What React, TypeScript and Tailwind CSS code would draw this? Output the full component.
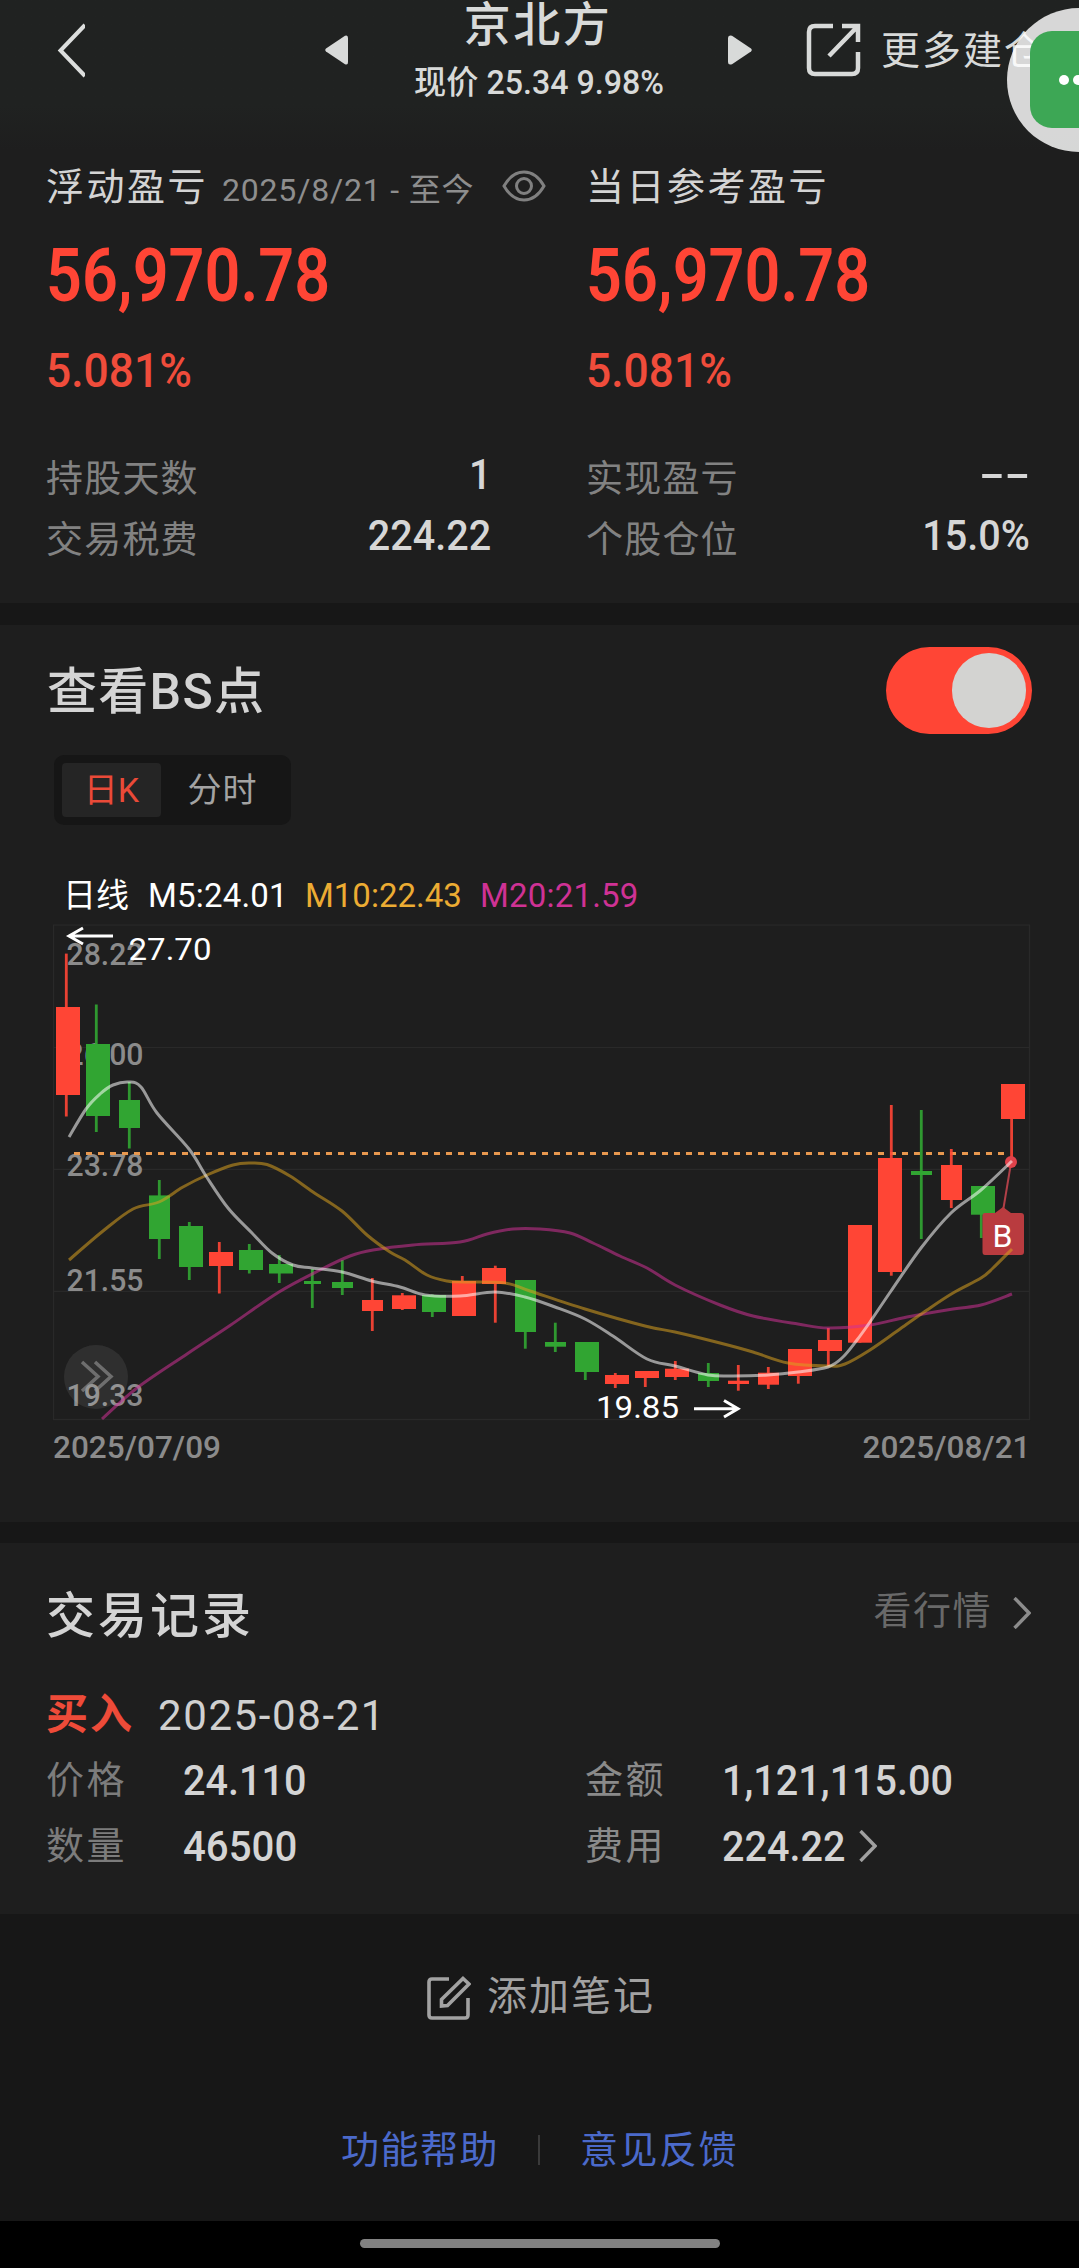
import { useState } from 'react';
import type { ReactNode } from 'react';

type Candle = { x: number; w: number; wick: number; high: number; low: number; top: number; bottom: number; up: boolean };
type Point = [number, number];

const RED = '#ff4535';
const GREEN = '#31a532';

// x, width, wick x, high, low, body top, body bottom, up
const rows: [number, number, number, number, number, number, number, boolean][] = [
    [56, 24, 66.3, 953.6, 1116.5, 1007, 1095, true],
    [86, 24, 96.3, 1004.5, 1132, 1044, 1116, false],
    [119, 21, 129.3, 1082, 1148.5, 1100, 1128, false],
    [149, 21, 159.3, 1180, 1259, 1195.4, 1239, false],
    [179, 24, 189.3, 1222, 1280, 1226, 1267, false],
    [209, 24, 219.3, 1242, 1293.5, 1252, 1266, true],
    [239, 24, 249.3, 1244, 1273.5, 1250, 1270, false],
    [269, 24, 279.3, 1255, 1283, 1264, 1273.5, false],
    [304, 17, 312.3, 1269, 1308, 1281, 1284, false],
    [332, 21, 342.3, 1260, 1295, 1282, 1288, false],
    [362, 21, 372.3, 1278, 1331, 1300, 1311, true],
    [392, 24, 402.3, 1293, 1310, 1295.3, 1309, true],
    [422, 24, 432.3, 1294.5, 1317, 1295, 1312, false],
    [452, 24, 462.3, 1276, 1316, 1281, 1316, true],
    [482, 24, 495.3, 1265.7, 1322.7, 1268, 1284, true],
    [515, 21, 525.3, 1280, 1348.7, 1280, 1332, false],
    [545, 21, 555.3, 1322.7, 1352, 1342, 1346.7, false],
    [575, 24, 585.3, 1342, 1380, 1342, 1372, false],
    [605, 24, 615.3, 1373, 1388, 1375, 1384, true],
    [635, 24, 645.3, 1371, 1387, 1371, 1378, true],
    [665, 24, 675.3, 1361, 1380, 1368.7, 1377, true],
    [698, 21, 708.3, 1363, 1387, 1373, 1381, false],
    [728, 21, 738.3, 1365, 1390.7, 1380.7, 1384, true],
    [758, 21, 768.3, 1367, 1389, 1372.7, 1384.7, true],
    [788, 24, 798.3, 1349, 1383.7, 1349, 1376, true],
    [818, 24, 828.3, 1328, 1366, 1340, 1351, true],
    [848, 24, 860, 1225, 1342.7, 1225, 1342.7, true],
    [878, 24, 891.3, 1105, 1275.7, 1158, 1272, true],
    [911, 21, 921.3, 1110, 1239, 1171, 1175, false],
    [941, 21, 951.3, 1149, 1208, 1165, 1200, true],
    [971, 24, 981.3, 1186, 1238, 1186, 1214.7, false],
    [1001, 24, 1011.6, 1084, 1160, 1084, 1119, true],
];
const candles: Candle[] = rows.map(([x, w, wick, high, low, top, bottom, up]) => ({ x, w, wick, high, low, top, bottom, up }));

const ma5: Point[] = [[69, 1137], [86, 1109], [100, 1094], [113, 1085], [129, 1082], [141, 1087], [157, 1113], [189, 1149], [206, 1176], [228, 1208], [252, 1233], [272, 1253], [293, 1265], [312, 1268], [342, 1272], [372, 1281], [400, 1287], [425, 1295], [460, 1296], [495, 1292], [525, 1297], [555, 1307], [585, 1319], [613, 1336], [647, 1359], [675, 1366], [708, 1375], [733, 1376], [768, 1375], [798, 1372], [828, 1367], [843, 1357], [857, 1340], [870, 1322], [891, 1291], [921, 1248], [951, 1213], [981, 1190], [1012, 1161]];
const ma10: Point[] = [[69, 1260], [103, 1231], [133, 1209], [159, 1202], [183, 1187], [207, 1175], [233, 1165], [250, 1163], [267, 1164.5], [290, 1176], [313, 1192], [342, 1211], [367, 1235], [390, 1252], [405, 1260], [427, 1275], [447, 1281], [463, 1282], [505, 1283], [530, 1291], [585, 1309], [645, 1326], [675, 1332], [720, 1343], [753, 1352], [788, 1363], [828, 1366], [845, 1364], [870, 1350], [900, 1329], [927, 1310], [953, 1293], [981, 1278], [993, 1268], [1012, 1249]];
const ma20: Point[] = [[102, 1419], [137, 1388], [187, 1354], [230, 1325.5], [279, 1292], [320, 1270], [350, 1256], [373, 1250], [413, 1245], [460, 1242], [487, 1234], [513, 1229], [540, 1229], [570, 1233], [593, 1243], [620, 1256], [647, 1268], [675, 1285], [720, 1305], [753, 1316], [798, 1324], [828, 1328], [870, 1325], [907, 1317], [953, 1309], [981, 1305], [1012, 1294]];

// curva suave que pasa por todos los puntos
function smooth(pts: Point[]) {
    let d = `M${pts[0][0]} ${pts[0][1]}`;
    for (let i = 0; i < pts.length - 1; i++) {
        const a = pts[i - 1] ?? pts[i];
        const b = pts[i];
        const c = pts[i + 1];
        const e = pts[i + 2] ?? c;
        d += ` C${b[0] + (c[0] - a[0]) / 6} ${b[1] + (c[1] - a[1]) / 6} ${c[0] - (e[0] - b[0]) / 6} ${c[1] - (e[1] - b[1]) / 6} ${c[0]} ${c[1]}`;
    }
    return d;
}

const axis = [
    { label: '28.22', y: 965 },
    { label: '26.00', y: 1064.5 },
    { label: '23.78', y: 1176 },
    { label: '21.55', y: 1291 },
    { label: '19.33', y: 1406 },
];

function Chart() {
    return (
        <svg className="mt-1 block h-[560px] w-full" viewBox="0 920 1079 560" fontFamily='Roboto, "Liberation Sans", sans-serif'>
            {/* marco y lineas de la cuadricula */}
            <g stroke="#292929" strokeWidth="1.2" fill="none">
                <rect x="53.5" y="925" width="976" height="494.5" />
                <path d="M54 1047.5H1029M54 1169.3H1029M54 1291.3H1029" />
            </g>
            <g fill="#8b8b8b" fontSize="32" fontWeight="500">
                {axis.map((a) => (
                    <text key={a.label} x="66.5" y={a.y} textLength="77" lengthAdjust="spacingAndGlyphs">{a.label}</text>
                ))}
                <text x="53" y="1457.5" textLength="168" lengthAdjust="spacingAndGlyphs">2025/07/09</text>
                <text x="862.5" y="1457.5" textLength="168" lengthAdjust="spacingAndGlyphs">2025/08/21</text>
            </g>
            <path d="M73 1153.4H1005" stroke="#e8984f" strokeWidth="3" strokeDasharray="6 6" strokeDashoffset="11" />
            {/* boton para expandir */}
            <circle cx="96" cy="1377" r="32" fill="#fff" opacity="0.08" />
            <path d="M82 1362L98 1376.5L82 1391M95 1362L111 1376.5L95 1391" stroke="#9a9a9a" strokeOpacity="0.6" strokeWidth="3.5" fill="none" />
            {candles.map((c) => (
                <g key={c.x} fill={c.up ? RED : GREEN}>
                    <rect x={c.wick - 1.4} y={c.high} width="2.8" height={c.low - c.high} opacity="0.9" />
                    <rect x={c.x} y={c.top} width={c.w} height={c.bottom - c.top} />
                </g>
            ))}
            {/* marca de compra */}
            <g>
                <path d="M1011 1163L1003 1211" stroke="#b04048" strokeWidth="2" />
                <path d="M985 1213H995L1003 1207L1011 1213H1021Q1024 1213 1024 1216V1252Q1024 1255 1021 1255H985Q982.5 1255 982.5 1252V1216Q982.5 1213 985 1213Z" fill="#b93b3f" />
                <circle cx="1011" cy="1162" r="6" fill="#e0424b" />
                <text x="1002.5" y="1247" fontSize="32" fill="#fff" textAnchor="middle">B</text>
            </g>
            <g fill="none" strokeWidth="3" strokeOpacity="0.55">
                <path d={smooth(ma20)} stroke="#cf3295" />
                <path d={smooth(ma10)} stroke="#d9a01f" />
                <path d={smooth(ma5)} stroke="#ffffff" />
            </g>
            <g stroke="#fff" strokeWidth="3" fill="none">
                <path d="M69 936H113M83 928L69 936L83 944" />
                <path d="M694 1408.7H738M724 1400.5L738 1408.7L724 1417" />
            </g>
            <g fill="#fff" fontSize="32">
                <text x="128.5" y="960" textLength="83" lengthAdjust="spacingAndGlyphs">27.70</text>
                <text x="596" y="1418" textLength="83" lengthAdjust="spacingAndGlyphs">19.85</text>
            </g>
        </svg>
    );
}

function Chevron({ color }: { color: string }) {
    return (
        <svg className="h-8 w-[18px] shrink-0" viewBox="0 0 18 32" fill="none" stroke={color} strokeWidth="3.4">
            <path d="M1.5 1L16 16L1.5 31" />
        </svg>
    );
}

function StatRow({ label, children }: { label: string; children: ReactNode }) {
    return (
        <div className="flex h-[61px] items-center justify-between pr-[49px]">
            <span className="text-[37px] tracking-[1.2px] text-[#828282]">{label}</span>
            <span className="origin-right scale-x-[0.92] pb-[11px] text-[43px] leading-[52px] font-medium text-[#d6d6d6]">{children}</span>
        </div>
    );
}

function ProfitValues() {
    return (
        <>
            <div className="mt-6 h-20 origin-left scale-x-[0.85] text-[74px] leading-[80px] font-semibold text-[#ff4535]">56,970.78</div>
            <div className="mt-[30px] h-[50px] origin-left scale-x-[0.905] text-[49px] leading-[50px] font-medium text-[#f04c3b]">5.081%</div>
        </>
    );
}

export default function App() {
    const [showPoints, setShowPoints] = useState(true);
    const [tab, setTab] = useState('day');

    return (
        <div className="relative flex h-[2268px] w-[1079px] flex-col overflow-hidden bg-[#171717] font-['Roboto','Noto_Sans_CJK_SC',sans-serif] whitespace-nowrap">
            {/* cabecera */}
            <header className="h-[150px] shrink-0 bg-linear-to-b from-[#202221] from-70% to-[#1e1e1e] text-[#d8dad9]">
                <div className="flex h-[100px] items-center pl-[57px]">
                    <svg className="h-14 w-7 shrink-0" viewBox="0 0 28 56" fill="none" stroke="#dcdedd" strokeWidth="4">
                        <path d="M28 3L3.5 28.5L28 54" />
                    </svg>
                    <svg className="ml-60 h-8 w-6 shrink-0" viewBox="0 0 24 32" fill="#d8dad9">
                        <path d="M1 17.5Q-0.5 16 1 14.5L20 1.8Q23 0.5 23 4V28Q23 31.5 20 30.2Z" />
                    </svg>
                    <div className="ml-[59px] w-[260px] shrink-0 self-start pt-[1px] text-center">
                        <div className="h-12 text-[47px] leading-[48px] font-medium tracking-[2.5px]">京北方</div>
                        <div className="mt-[14px] ml-[2px] h-10 scale-x-[0.975] text-[33px] leading-[40px] font-medium">现价 25.34 9.98%</div>
                    </div>
                    <svg className="ml-[60px] h-8 w-6 shrink-0" viewBox="0 0 24 32" fill="#d8dad9">
                        <path d="M23 17.5Q24.5 16 23 14.5L4 1.8Q0 0.5 0 4V28Q0 31.5 4 30.2Z" />
                    </svg>
                    <svg className="ml-[54px] h-14 w-14 shrink-0" viewBox="0 0 56 56" fill="none" stroke="#d8dad9" strokeWidth="4.5">
                        <path d="M27 4H9Q3 4 3 10V46Q3 52 9 52H46Q52 52 52 46V30" />
                        <path d="M36 4H52V20M52 4L23 34" />
                    </svg>
                    <span className="ml-[19px] shrink-0 pt-[2px] text-[39px] tracking-[2px]">更多建仓</span>
                </div>
            </header>

            {/* burbuja flotante */}
            <div className="absolute top-2 left-[1007px] h-36 w-36 rounded-full bg-white/82">
                <div className="absolute top-[23px] left-[23px] flex h-[97px] w-[97px] items-center gap-1 rounded-[22px] bg-[#3da755] pl-[29px]">
                    <span className="h-[10px] w-[10px] rounded-full bg-white"></span>
                    <span className="h-[10px] w-[10px] rounded-full bg-white"></span>
                    <span className="h-[10px] w-[10px] rounded-full bg-white"></span>
                </div>
            </div>

            {/* resumen de ganancias */}
            <section className="grid h-[453px] shrink-0 grid-cols-[540px_539px] bg-[#1e1e1e] pt-3">
                <div className="pl-[46px]">
                    <div className="flex h-[50px] items-center">
                        <span className="shrink-0 text-[38px] tracking-[2.5px] text-[#d4d4d4]">浮动盈亏</span>
                        <span className="ml-[14px] w-[280px] shrink-0 pt-[5px] text-[32px] tracking-[0.8px] text-[#8e8e8e]">2025/8/21 - 至今</span>
                        <svg className="mb-[3px] h-8 w-11 shrink-0" viewBox="0 0 44 32" fill="none" stroke="#808080" strokeWidth="3">
                            <path d="M2 16Q10 2 22 2T42 16Q34 30 22 30T2 16Z" />
                            <circle cx="22" cy="16" r="7.5" />
                        </svg>
                    </div>
                    <ProfitValues />
                    <div className="mt-[53px]">
                        <StatRow label="持股天数">1</StatRow>
                        <StatRow label="交易税费">224.22</StatRow>
                    </div>
                </div>
                <div className="pl-[46px]">
                    <div className="flex h-[50px] items-center">
                        <span className="text-[38px] tracking-[2.5px] text-[#d4d4d4]">当日参考盈亏</span>
                    </div>
                    <ProfitValues />
                    <div className="mt-[53px]">
                        <StatRow label="实现盈亏"><span className="inline-block origin-right scale-x-[1.9]">--</span></StatRow>
                        <StatRow label="个股仓位">15.0%</StatRow>
                    </div>
                </div>
            </section>

            {/* grafico con los puntos de compra y venta */}
            <section className="mt-[22px] h-[897px] shrink-0 bg-[#1e1e1e] pt-[22px]">
                <div className="flex h-[87px] items-center justify-between pr-[47px] pl-[47px]">
                    <h2 className="pt-[3px] text-[50px] font-medium tracking-[1.3px] text-[#d4d4d4]">查看BS点</h2>
                    <button
                        className={`flex h-[87px] w-[146px] items-center rounded-full px-[6px] ${showPoints ? 'justify-end bg-[#ff4535]' : 'bg-[#444]'}`}
                        onClick={() => setShowPoints(!showPoints)}
                    >
                        <span className="h-[75px] w-[74px] rounded-full bg-[#d3d3d1]"></span>
                    </button>
                </div>
                <div className="mt-[21px] ml-[54px] flex h-[70px] w-[237px] items-center rounded-[10px] bg-[#161616] pl-2 text-[34px]">
                    <button className={`h-[54px] w-[99px] rounded-[4px] ${tab === 'day' ? 'bg-[#252525] text-[#ea4a38]' : 'text-[#a3a3a3]'}`} onClick={() => setTab('day')}>
                        日K
                    </button>
                    <button className={`ml-3 h-[54px] w-[99px] rounded-[4px] tracking-[1px] ${tab === 'time' ? 'bg-[#252525] text-[#ea4a38]' : 'text-[#a3a3a3]'}`} onClick={() => setTab('time')}>
                        分时
                    </button>
                </div>
                <div className="mt-[51px] flex h-10 items-center pl-[63px] text-[33px] text-white">
                    <span className="w-[85px]">日线</span>
                    <span className="w-[157px] tracking-[0.2px]">M5:24.01</span>
                    <span className="w-[175px] text-[#ecac33]">M10:22.43</span>
                    <span className="tracking-[0.2px] text-[#cf3295]">M20:21.59</span>
                </div>
                <Chart />
            </section>

            {/* registro de operaciones */}
            <section className="mt-[21px] h-[371px] shrink-0 bg-[#1e1e1e] pt-[43px] pl-[46px]">
                <div className="flex h-[60px] items-center justify-between pr-[48px]">
                    <h2 className="pt-[2px] text-[49px] font-medium tracking-[3px] text-[#d4d4d4]">交易记录</h2>
                    <div className="flex items-center pb-[10px] text-[38px] tracking-[1.5px] text-[#696969]">
                        看行情
                        <span className="ml-[21px] pt-[3px]"><Chevron color="#8c8c8c" /></span>
                    </div>
                </div>
                <div className="mt-[43px] flex h-[50px] items-center">
                    <span className="w-[112px] text-[42px] font-bold tracking-[2px] text-[#ee4b39]">买入</span>
                    <span className="pt-[3px] text-[42px] tracking-[1.6px] text-[#d0d0d0]">2025-08-21</span>
                </div>
                <div className="mt-[8px] grid auto-rows-[66px] grid-cols-[137px_402px_137px_1fr] items-center text-[43px] font-medium text-[#d4d4d4]">
                    <span className="text-[38px] font-normal tracking-[2.5px] text-[#7c7c7c]">价格</span>
                    <span className="origin-left scale-x-[0.92]">24.110</span>
                    <span className="text-[38px] font-normal tracking-[2.5px] text-[#8a8a8a]">金额</span>
                    <span className="origin-left scale-x-[0.92]">1,121,115.00</span>
                    <span className="text-[38px] font-normal tracking-[2.5px] text-[#7c7c7c]">数量</span>
                    <span className="origin-left scale-x-[0.935]">46500</span>
                    <span className="text-[38px] font-normal tracking-[2.5px] text-[#8a8a8a]">费用</span>
                    <span className="flex items-center">
                        <span className="w-[137px] origin-left scale-x-[0.92]">224.22</span>
                        <Chevron color="#a0a0a0" />
                    </span>
                </div>
            </section>

            {/* notas y enlaces */}
            <footer className="h-[307px] shrink-0 pt-[54px]">
                <div className="flex h-[60px] items-center pl-[426px] text-[40px] tracking-[2px] text-[#a2a2a2]">
                    <svg className="mr-[16px] h-[45px] w-[45px]" viewBox="0 0 45 45" fill="none" stroke="#a2a2a2" strokeWidth="3.6">
                        <path d="M23 3H6Q3 3 3 6V39Q3 42 6 42H39Q42 42 42 39V22" />
                        <path d="M15.5 30V23.5L37 2.5L43 8L21.5 29.5Z" />
                    </svg>
                    <span className="pb-[2px]">添加笔记</span>
                </div>
                <div className="mt-[102px] flex h-10 items-center justify-center text-[38px] tracking-[1.5px] text-[#4b6acb]">
                    <span>功能帮助</span>
                    <span className="mr-[40px] ml-[39px] h-[30px] w-[2px] bg-[#3a3a3a]"></span>
                    <span>意见反馈</span>
                </div>
            </footer>
            <div className="flex h-[47px] shrink-0 justify-center bg-black pt-[18px]">
                <div className="h-[9px] w-[360px] rounded-full bg-[#828282]"></div>
            </div>
        </div>
    );
}
